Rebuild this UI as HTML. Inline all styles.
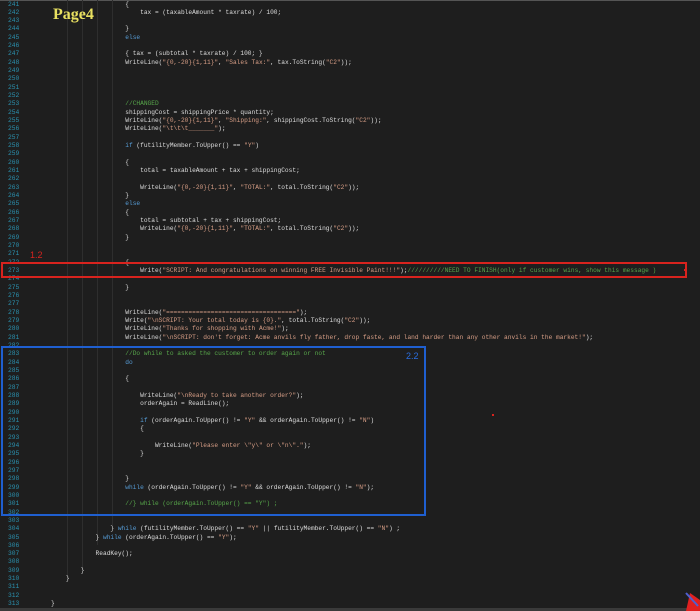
<!DOCTYPE html>
<html><head><style>
html,body{margin:0;padding:0;width:700px;height:611px;overflow:hidden;background:#1e1e1e}
.ln{position:absolute;left:0;top:0.5px;width:40px;font:6.3px/8.33px "Liberation Mono",monospace;color:#2b91af;white-space:pre;padding-left:8px}
.code{position:absolute;left:51px;top:0.5px;font:6.2px/8.33px "Liberation Mono",monospace;color:#dcdcdc;white-space:pre;margin:0}
.s{color:#d69d85}.k{color:#569cd6}.c{color:#57a64a}
.g{position:absolute;width:1px;background:#2e2e2e}
</style></head><body>
<div style="position:absolute;left:0;top:0;width:700px;height:1px;background:#555"></div>
<div style="position:absolute;left:0;top:608px;width:700px;height:3px;background:#3a3a3a"></div>
<div class="g" style="left:67px;top:0;height:580px"></div>
<div class="g" style="left:82px;top:0;height:570px"></div>
<div class="g" style="left:97px;top:0;height:545px"></div>
<div class="g" style="left:112px;top:0;height:525px"></div>
<div class="ln">241
242
243
244
245
246
247
248
249
250
251
252
253
254
255
256
257
258
259
260
261
262
263
264
265
266
267
268
269
270
271
272
273
274
275
276
277
278
279
280
281
282
283
284
285
286
287
288
289
290
291
292
293
294
295
296
297
298
299
300
301
302
303
304
305
306
307
308
309
310
311
312
313</div>
<pre class="code">                    {
                        tax = (taxableAmount * taxrate) / 100;

                    }
                    <span class="k">else</span>

                    { tax = (subtotal * taxrate) / 100; }
                    WriteLine(<span class="s">"{0,-20}{1,11}"</span>, <span class="s">"Sales Tax:"</span>, tax.ToString(<span class="s">"C2"</span>));




                    <span class="c">//CHANGED</span>
                    shippingCost = shippingPrice * quantity;
                    WriteLine(<span class="s">"{0,-20}{1,11}"</span>, <span class="s">"Shipping:"</span>, shippingCost.ToString(<span class="s">"C2"</span>));
                    WriteLine(<span class="s">"\t\t\t_______"</span>);

                    <span class="k">if</span> (futilityMember.ToUpper() == <span class="s">"Y"</span>)

                    {
                        total = taxableAmount + tax + shippingCost;

                        WriteLine(<span class="s">"{0,-20}{1,11}"</span>, <span class="s">"TOTAL:"</span>, total.ToString(<span class="s">"C2"</span>));
                    }
                    <span class="k">else</span>
                    {
                        total = subtotal + tax + shippingCost;
                        WriteLine(<span class="s">"{0,-20}{1,11}"</span>, <span class="s">"TOTAL:"</span>, total.ToString(<span class="s">"C2"</span>));
                    }


                    {
                        Write(<span class="s">"SCRIPT: And congratulations on winning FREE Invisible Paint!!!"</span>);<span class="c">//////////NEED TO FINISH(only if customer wins, show this message )</span>

                    }


                    WriteLine(<span class="s">"==================================="</span>);
                    Write(<span class="s">"\nSCRIPT: Your total today is {0}."</span>, total.ToString(<span class="s">"C2"</span>));
                    WriteLine(<span class="s">"Thanks for shopping with Acme!"</span>);
                    WriteLine(<span class="s">"\nSCRIPT: don't forget: Acme anvils fly father, drop faste, and land harder than any other anvils in the market!"</span>);

                    <span class="c">//Do while to asked the customer to order again or not</span>
                    <span class="k">do</span>

                    {

                        WriteLine(<span class="s">"\nReady to take another order?"</span>);
                        orderAgain = ReadLine();

                        <span class="k">if</span> (orderAgain.ToUpper() != <span class="s">"Y"</span> &amp;&amp; orderAgain.ToUpper() != <span class="s">"N"</span>)
                        {

                            WriteLine(<span class="s">"Please enter \"y\" or \"n\"."</span>);
                        }


                    }
                    <span class="k">while</span> (orderAgain.ToUpper() != <span class="s">"Y"</span> &amp;&amp; orderAgain.ToUpper() != <span class="s">"N"</span>);

                    <span class="c">//} while (orderAgain.ToUpper() == "Y") ;</span>


                } <span class="k">while</span> (futilityMember.ToUpper() == <span class="s">"Y"</span> || futilityMember.ToUpper() == <span class="s">"N"</span>) ;
            } <span class="k">while</span> (orderAgain.ToUpper() == <span class="s">"Y"</span>);

            ReadKey();

        }
    }


}</pre>
<div style="position:absolute;left:53px;top:6px;font:bold 16px 'Liberation Serif',serif;color:#e8e060">Page4</div>
<div style="position:absolute;left:1px;top:262px;width:682px;height:12px;border:2px solid #d8231e"></div>
<div style="position:absolute;left:30px;top:250px;font:9px 'Liberation Sans',sans-serif;color:#d8231e">1.2</div>
<div style="position:absolute;left:1px;top:346px;width:421px;height:166px;border:2px solid #1f5fd0"></div>
<div style="position:absolute;left:406px;top:351px;font:9px 'Liberation Sans',sans-serif;color:#2a6ee0">2.2</div>
<div style="position:absolute;left:492px;top:414px;width:2px;height:2px;background:#d8231e"></div>
<div style="position:absolute;left:684px;top:269px;width:2px;height:2px;background:#d8231e"></div>
<svg style="position:absolute;left:684px;top:592px" width="16" height="19"><polygon points="2,19 16,19 16,8 6,1" fill="#e02020"/><line x1="2" y1="1" x2="14" y2="14" stroke="#5060d0" stroke-width="2"/></svg>
</body></html>
